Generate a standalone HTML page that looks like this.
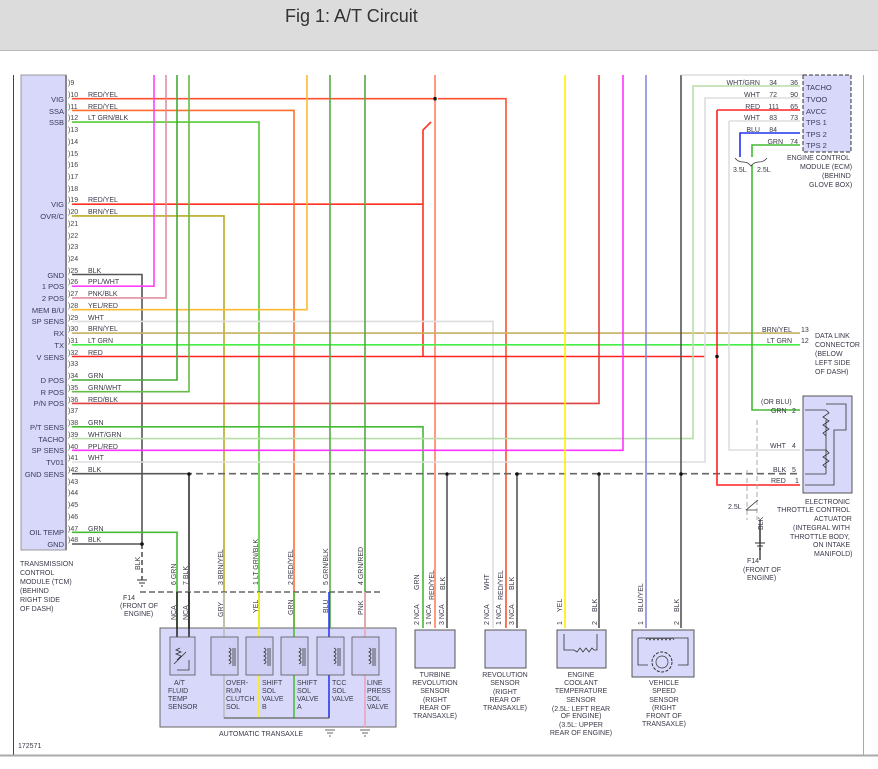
<!DOCTYPE html>
<html><head><meta charset="utf-8"><style>
html,body{margin:0;padding:0;background:#fff;}
svg{display:block;font-family:"Liberation Sans",Arial,sans-serif;}
.t{font-size:7px;fill:#3a3a4a;}
.l{font-size:7.5px;fill:#3a3a5a;}
.n{font-size:7px;fill:#444;}
</style></head><body>
<svg width="878" height="769" viewBox="0 0 878 769" xmlns="http://www.w3.org/2000/svg">
<rect x="0" y="0" width="878" height="50" fill="#dcdcdc"/>
<line x1="0" y1="50.5" x2="878" y2="50.5" stroke="#bbb"/>
<text x="285" y="22" font-size="18" fill="#333">Fig 1: A/T Circuit</text>
<line x1="13.5" y1="75" x2="13.5" y2="756" stroke="#444"/>
<line x1="863.5" y1="75" x2="863.5" y2="756" stroke="#aaa"/>
<line x1="0" y1="755.5" x2="878" y2="755.5" stroke="#aaa" stroke-width="2"/>
<text class="t" x="18" y="748">172571</text>

<!-- TCM -->
<rect x="21" y="75" width="45" height="475" fill="#d8d8fa" stroke="#999"/>
<line x1="66" y1="75" x2="66" y2="550" stroke="#888" stroke-width="2"/>
<g class="l" text-anchor="end">
<text x="64" y="102">VIG</text><text x="64" y="114">SSA</text><text x="64" y="125">SSB</text>
<text x="64" y="207">VIG</text><text x="64" y="219">OVR/C</text>
<text x="64" y="278">GND</text><text x="64" y="289">1 POS</text><text x="64" y="301">2 POS</text>
<text x="64" y="313">MEM B/U</text><text x="64" y="324">SP SENS</text><text x="64" y="336">RX</text>
<text x="64" y="348">TX</text><text x="64" y="360">V SENS</text>
<text x="64" y="383">D POS</text><text x="64" y="395">R POS</text><text x="64" y="406">P/N POS</text>
<text x="64" y="430">P/T SENS</text><text x="64" y="442">TACHO</text><text x="64" y="453">SP SENS</text>
<text x="64" y="465">TV01</text><text x="64" y="477">GND SENS</text>
<text x="64" y="535">OIL TEMP</text><text x="64" y="547">GND</text>
</g>
<g class="n">
<text x="68" y="85">)9</text><text x="68" y="97">)10</text><text x="68" y="109">)11</text><text x="68" y="120">)12</text>
<text x="68" y="132">)13</text><text x="68" y="144">)14</text><text x="68" y="156">)15</text><text x="68" y="167">)16</text>
<text x="68" y="179">)17</text><text x="68" y="191">)18</text><text x="68" y="202">)19</text><text x="68" y="214">)20</text>
<text x="68" y="226">)21</text><text x="68" y="238">)22</text><text x="68" y="249">)23</text><text x="68" y="261">)24</text>
<text x="68" y="273">)25</text><text x="68" y="284">)26</text><text x="68" y="296">)27</text><text x="68" y="308">)28</text>
<text x="68" y="320">)29</text><text x="68" y="331">)30</text><text x="68" y="343">)31</text><text x="68" y="355">)32</text>
<text x="68" y="366">)33</text><text x="68" y="378">)34</text><text x="68" y="390">)35</text><text x="68" y="402">)36</text>
<text x="68" y="413">)37</text><text x="68" y="425">)38</text><text x="68" y="437">)39</text><text x="68" y="449">)40</text>
<text x="68" y="460">)41</text><text x="68" y="472">)42</text><text x="68" y="484">)43</text><text x="68" y="495">)44</text>
<text x="68" y="507">)45</text><text x="68" y="519">)46</text><text x="68" y="531">)47</text><text x="68" y="542">)48</text>
</g>
<g class="t">
<text x="88" y="97">RED/YEL</text><text x="88" y="109">RED/YEL</text><text x="88" y="120">LT GRN/BLK</text>
<text x="88" y="202">RED/YEL</text><text x="88" y="214">BRN/YEL</text>
<text x="88" y="273">BLK</text><text x="88" y="284">PPL/WHT</text><text x="88" y="296">PNK/BLK</text>
<text x="88" y="308">YEL/RED</text><text x="88" y="320">WHT</text><text x="88" y="331">BRN/YEL</text>
<text x="88" y="343">LT GRN</text><text x="88" y="355">RED</text><text x="88" y="378">GRN</text>
<text x="88" y="390">GRN/WHT</text><text x="88" y="402">RED/BLK</text><text x="88" y="425">GRN</text>
<text x="88" y="437">WHT/GRN</text><text x="88" y="449">PPL/RED</text><text x="88" y="460">WHT</text>
<text x="88" y="472">BLK</text><text x="88" y="531">GRN</text><text x="88" y="542">BLK</text>
</g>
<g class="t"><text x="20" y="566">TRANSMISSION</text><text x="20" y="575">CONTROL</text><text x="20" y="584">MODULE (TCM)</text><text x="20" y="593">(BEHIND</text><text x="20" y="602">RIGHT SIDE</text><text x="20" y="611">OF DASH)</text></g>

<!-- wires -->
<g fill="none" stroke-width="1.6">
<path d="M72 98.7H433M438 98.7H506V628" stroke="#ff5030"/>
<path d="M435 75V628" stroke="#ff8060"/>
<path d="M72 204.2H423M423 204V130L431 122" stroke="#ff3020"/>
<path d="M423 204V357" stroke="#ff3020"/>
<path d="M72 110.4H294V628" stroke="#ff7030"/>
<path d="M72 122.1H259V628" stroke="#55cc33"/>
<path d="M72 215.9H224V628" stroke="#bbaa22"/>
<path d="M72 274.5H142V544" stroke="#555"/>
<path d="M72 286.2H154V75" stroke="#ff40ff"/>
<path d="M72 297.9H166V75" stroke="#e090a0"/>
<path d="M72 309.7H307V75" stroke="#ffbb33"/>
<path d="M72 321.4H493V628" stroke="#dddddd"/>
<path d="M72 333.1H800" stroke="#c8b060"/>
<path d="M72 344.8H800" stroke="#44ee44"/>
<path d="M72 356.5H705" stroke="#ff2020"/>
<path d="M72 380H177V75" stroke="#44aa33"/>
<path d="M72 391.7H189V75" stroke="#66bb44"/>
<path d="M72 403.4H599V75" stroke="#e04040"/>
<path d="M72 426.8H423V628" stroke="#44bb33"/>
<path d="M72 438.6H693V86H800" stroke="#b8dca8"/>
<path d="M72 450.3H623V75" stroke="#ff33ff"/>
<path d="M72 462H705V98H800" stroke="#dddddd"/>
<path d="M72 473.7H185" stroke="#555"/>
<path d="M185 473.7H800" stroke="#666" stroke-dasharray="7,4"/>
<path d="M72 532.3H177V628" stroke="#44bb33"/>
<path d="M72 544H142" stroke="#555"/>
<path d="M142 544V580" stroke="#555" stroke-dasharray="5,3"/>
<path d="M189 474V628" stroke="#333"/>
<path d="M330 75V628" stroke="#55aa44"/>
<path d="M365 75V628" stroke="#55aa44"/>
<path d="M447 474V628" stroke="#555"/>
<path d="M517 474V628" stroke="#555"/>
<path d="M565 75V628" stroke="#ffee00"/>
<path d="M599 474V628" stroke="#555"/>
<path d="M681 75V628" stroke="#555"/>
<path d="M681 75H803" stroke="#ccc" stroke-width="1"/>
<path d="M646 75V628" stroke="#8888dd"/>
<path d="M717 110H800M717 110V485H800" stroke="#ff2020"/>
<path d="M729 121H800M729 121V450H800" stroke="#dddddd"/>
<path d="M740 157V133H800" stroke="#2233ee"/>
<path d="M752 157V145H800" stroke="#44bb33"/>
<path d="M752 165V410H800" stroke="#44bb33"/>
<path d="M760 520V560" stroke="#555"/>
<path d="M747 470V520M757 420V520" stroke="#aaa" stroke-dasharray="5,3" stroke-width="1"/>
<path d="M148 600V635" stroke="#fff" stroke-width="0"/>
</g>
<g fill="#111">
<circle cx="435" cy="98.7" r="1.8"/><circle cx="717" cy="356.5" r="1.8"/><circle cx="142" cy="544" r="1.8"/>
<circle cx="189" cy="474" r="1.8"/><circle cx="447" cy="474" r="1.8"/><circle cx="517" cy="474" r="1.8"/>
<circle cx="599" cy="474" r="1.8"/><circle cx="681" cy="474" r="1.8"/>
</g>
<!-- ground symbols -->
<g stroke="#333" stroke-width="1"><path d="M137 580h10M139 583h6M141 586h2"/><path d="M755 543h10M757 546h6M759 549h2M760 525v18"/></g>
<g class="t"><text x="123" y="600">F14</text><text x="120" y="608">(FRONT OF</text><text x="124" y="616">ENGINE)</text>
<text x="747" y="563">F14</text><text x="743" y="572">(FRONT OF</text><text x="747" y="580">ENGINE)</text>
<text x="728" y="509">2.5L</text></g>
<path d="M746 510L758 500M746 510H757" stroke="#333" fill="none" stroke-width="0.8"/>

<!-- ECM -->
<rect x="803" y="75" width="48" height="77" fill="#d8d8fa" stroke="#333" stroke-dasharray="4,2"/>
<g class="l"><text x="806" y="90">TACHO</text><text x="806" y="102">TVOO</text><text x="806" y="114">AVCC</text><text x="806" y="125">TPS 1</text><text x="806" y="137">TPS 2</text><text x="806" y="148">TPS 2</text></g>
<g class="t" text-anchor="end"><text x="760" y="85">WHT/GRN</text><text x="777" y="85">34</text><text x="798" y="85">36</text>
<text x="760" y="97">WHT</text><text x="777" y="97">72</text><text x="798" y="97">90</text>
<text x="760" y="109">RED</text><text x="779" y="109">111</text><text x="798" y="109">65</text>
<text x="760" y="120">WHT</text><text x="777" y="120">83</text><text x="798" y="120">73</text>
<text x="760" y="132">BLU</text><text x="777" y="132">84</text>
<text x="783" y="144">GRN</text><text x="798" y="144">74</text></g>
<g class="t"><text x="733" y="172">3.5L</text><text x="757" y="172">2.5L</text>
<text x="787" y="160">ENGINE CONTROL</text><text x="800" y="169">MODULE (ECM)</text><text x="822" y="178">(BEHIND</text><text x="809" y="187">GLOVE BOX)</text>
<text x="762" y="332">BRN/YEL</text><text x="801" y="332">13</text><text x="767" y="343">LT GRN</text><text x="801" y="343">12</text>
<text x="815" y="338">DATA LINK</text><text x="815" y="347">CONNECTOR</text><text x="815" y="356">(BELOW</text><text x="815" y="365">LEFT SIDE</text><text x="815" y="374">OF DASH)</text>
<text x="761" y="404">(OR BLU)</text><text x="771" y="413">GRN</text><text x="792" y="413">2</text>
<text x="770" y="448">WHT</text><text x="792" y="448">4</text><text x="773" y="472">BLK</text><text x="792" y="472">5</text>
<text x="771" y="483">RED</text><text x="795" y="483">1</text>
<text x="805" y="504">ELECTRONIC</text><text x="777" y="512">THROTTLE CONTROL</text><text x="814" y="521">ACTUATOR</text>
<text x="793" y="530">(INTEGRAL WITH</text><text x="790" y="539">THROTTLE BODY,</text><text x="813" y="547">ON INTAKE</text><text x="814" y="556">MANIFOLD)</text></g>
<path d="M735 158q3 4 8 4q5 0 8 4q3-4 8-4q5 0 8-4" stroke="#333" fill="none" stroke-width="0.7"/>
<rect x="803" y="396" width="49" height="97" fill="#d8d8fa" stroke="#555"/>
<path d="M805 410H826M805 450H826M805 474H826M805 485H834V430H846V404H826M826 474V420M826 410l3 3-6 4 6 4-6 4 6 4-6 4 3 3M826 450l3 3-6 4 6 4-6 4 3 3" stroke="#333" fill="none" stroke-width="0.8"/>

<!-- Transaxle -->
<path d="M140 592H380" stroke="#666" stroke-dasharray="6,3" stroke-width="1.5"/>
<rect x="160" y="628" width="236" height="99" fill="#d8d8fa" stroke="#666"/>
<g fill="none" stroke-width="1.5">
<path d="M177 592V660" stroke="#222"/><path d="M189 592V660" stroke="#222"/>
<path d="M224 592V718H329V700" stroke="#bbb"/><path d="M259 592V718" stroke="#ffee00"/>
<path d="M294 592V718" stroke="#44bb33"/><path d="M329 592V718" stroke="#2233ee"/><path d="M365 592V728" stroke="#f0a0b0"/>
</g>
<path d="M224 718H329" stroke="#555" stroke-width="1"/>
<g fill="#d0d0f6" stroke="#555" stroke-width="0.8">
<rect x="170" y="637" width="25" height="38"/><rect x="211" y="637" width="27" height="38"/><rect x="246" y="637" width="27" height="38"/>
<rect x="281" y="637" width="27" height="38"/><rect x="317" y="637" width="27" height="38"/><rect x="352" y="637" width="27" height="38"/>
</g>
<g stroke="#333" fill="none" stroke-width="0.8">
<path d="M229 648q4 2 0 4q4 2 0 4q4 2 0 4q4 2 0 4M233 648v18M235 648v18"/>
<path d="M264 648q4 2 0 4q4 2 0 4q4 2 0 4q4 2 0 4M268 648v18M270 648v18"/>
<path d="M299 648q4 2 0 4q4 2 0 4q4 2 0 4q4 2 0 4M303 648v18M305 648v18"/>
<path d="M334 648q4 2 0 4q4 2 0 4q4 2 0 4q4 2 0 4M338 648v18M340 648v18"/>
<path d="M369 648q4 2 0 4q4 2 0 4q4 2 0 4q4 2 0 4M373 648v18M375 648v18"/>
<path d="M177 660l4-4-5-2 5-2-5-2 4-2M174 664l12-12M189 660V670H177"/>
<path d="M325 730h10M327 733h6M329 736h2M360 730h10M362 733h6M364 736h2"/>
</g>
<g class="t">
<text x="174" y="685">A/T</text><text x="168" y="693">FLUID</text><text x="168" y="701">TEMP</text><text x="168" y="709">SENSOR</text>
<text x="226" y="685">OVER-</text><text x="226" y="693">RUN</text><text x="226" y="701">CLUTCH</text><text x="226" y="709">SOL</text>
<text x="262" y="685">SHIFT</text><text x="262" y="693">SOL</text><text x="262" y="701">VALVE</text><text x="262" y="709">B</text>
<text x="297" y="685">SHIFT</text><text x="297" y="693">SOL</text><text x="297" y="701">VALVE</text><text x="297" y="709">A</text>
<text x="332" y="685">TCC</text><text x="332" y="693">SOL</text><text x="332" y="701">VALVE</text>
<text x="367" y="685">LINE</text><text x="367" y="693">PRESS</text><text x="367" y="701">SOL</text><text x="367" y="709">VALVE</text>
<text x="219" y="736">AUTOMATIC TRANSAXLE</text>
</g>
<g class="t" font-size="6.5">
<text transform="translate(176,585) rotate(-90)">6 GRN</text><text transform="translate(188,585) rotate(-90)">7 BLK</text>
<text transform="translate(223,585) rotate(-90)">3 BRN/YEL</text><text transform="translate(258,585) rotate(-90)">1 LT GRN/BLK</text>
<text transform="translate(293,585) rotate(-90)">2 RED/YEL</text><text transform="translate(328,585) rotate(-90)">5 GRN/BLK</text>
<text transform="translate(363,585) rotate(-90)">4 GRN/RED</text>
<text transform="translate(176,620) rotate(-90)">NCA</text><text transform="translate(188,620) rotate(-90)">NCA</text>
<text transform="translate(223,617) rotate(-90)">GRY</text><text transform="translate(258,613) rotate(-90)">YEL</text>
<text transform="translate(293,615) rotate(-90)">GRN</text><text transform="translate(328,613) rotate(-90)">BLU</text><text transform="translate(363,615) rotate(-90)">PNK</text>
<text transform="translate(140,570) rotate(-90)">BLK</text><text transform="translate(763,530) rotate(-90)">BLK</text>
<text transform="translate(419,590) rotate(-90)">GRN</text><text transform="translate(434,600) rotate(-90)">RED/YEL</text><text transform="translate(445,590) rotate(-90)">BLK</text>
<text transform="translate(419,625) rotate(-90)">2 NCA</text><text transform="translate(431,625) rotate(-90)">1 NCA</text><text transform="translate(444,625) rotate(-90)">3 NCA</text>
<text transform="translate(489,590) rotate(-90)">WHT</text><text transform="translate(503,600) rotate(-90)">RED/YEL</text><text transform="translate(514,590) rotate(-90)">BLK</text>
<text transform="translate(489,625) rotate(-90)">2 NCA</text><text transform="translate(501,625) rotate(-90)">1 NCA</text><text transform="translate(514,625) rotate(-90)">3 NCA</text>
<text transform="translate(562,612) rotate(-90)">YEL</text><text transform="translate(597,612) rotate(-90)">BLK</text>
<text transform="translate(562,625) rotate(-90)">1</text><text transform="translate(597,625) rotate(-90)">2</text>
<text transform="translate(643,612) rotate(-90)">BLU/YEL</text><text transform="translate(679,612) rotate(-90)">BLK</text>
<text transform="translate(643,625) rotate(-90)">1</text><text transform="translate(679,625) rotate(-90)">2</text>
</g>

<!-- sensors -->
<g fill="#d8d8fa" stroke="#555"><rect x="415" y="630" width="40" height="38"/><rect x="485" y="630" width="41" height="38"/><rect x="557" y="630" width="49" height="38"/><rect x="632" y="630" width="62" height="47"/></g>
<path d="M564 634V650H574l3 2 3-4 3 4 3-4 3 4 3-4 2 2h3V634" stroke="#333" fill="none" stroke-width="0.8"/>
<path d="M638 638H688V665H678M638 638V665H648M646 640q2-4 4 0q2-4 4 0q2-4 4 0q2-4 4 0q2-4 4 0q2-4 4 0q2-4 4 0" stroke="#333" fill="none" stroke-width="0.8"/>
<circle cx="662" cy="662" r="10" fill="none" stroke="#333" stroke-dasharray="3,1.5"/><circle cx="662" cy="662" r="6" fill="none" stroke="#333" stroke-width="0.7"/>
<g class="t" text-anchor="middle">
<text x="435" y="677">TURBINE</text><text x="435" y="685">REVOLUTION</text><text x="435" y="693">SENSOR</text><text x="435" y="702">(RIGHT</text><text x="435" y="710">REAR OF</text><text x="435" y="718">TRANSAXLE)</text>
<text x="505" y="677">REVOLUTION</text><text x="505" y="685">SENSOR</text><text x="505" y="694">(RIGHT</text><text x="505" y="702">REAR OF</text><text x="505" y="710">TRANSAXLE)</text>
<text x="581" y="677">ENGINE</text><text x="581" y="685">COOLANT</text><text x="581" y="693">TEMPERATURE</text><text x="581" y="702">SENSOR</text>
<text x="581" y="711">(2.5L: LEFT REAR</text><text x="581" y="718">OF ENGINE)</text><text x="581" y="727">(3.5L: UPPER</text><text x="581" y="735">REAR OF ENGINE)</text>
<text x="664" y="685">VEHICLE</text><text x="664" y="693">SPEED</text><text x="664" y="702">SENSOR</text><text x="664" y="710">(RIGHT</text><text x="664" y="718">FRONT OF</text><text x="664" y="726">TRANSAXLE)</text>
</g>
</svg>
</body></html>
